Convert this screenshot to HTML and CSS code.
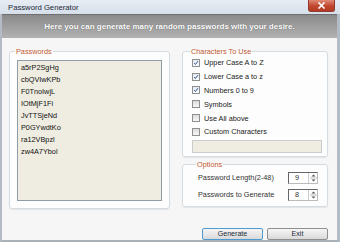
FILE: index.html
```html
<!DOCTYPE html>
<html lang="en">
<head>
	<meta charset="UTF-8">
	<title>Password Generator</title>
	<link rel="stylesheet" href="styles.css">
</head>
<body>
	<div class="window">
		<div class="titlebar">
			<span class="title">Password Generator</span>
			<span class="close">
				<svg width="9" height="7" viewBox="0 0 9 7"><path d="M1.5 0.5 L7.5 6.5 M7.5 0.5 L1.5 6.5" stroke="#fff" stroke-width="1.6"/></svg>
			</span>
		</div>
		<div class="frame">
			<div class="banner">Here you can generate many random passwords with your desire.</div>
			<div class="main">
				<fieldset class="group passwords">
					<legend>Passwords</legend>
					<div class="listbox">
						<div class="item">a5rP2SgHg</div>
						<div class="item">cbQVIwKPb</div>
						<div class="item">F0TnoIwjL</div>
						<div class="item">IOtMjF1Fi</div>
						<div class="item">JvTTSjeNd</div>
						<div class="item">P0GYwdtKo</div>
						<div class="item">ra12VBpzl</div>
						<div class="item">zw4A7Ybol</div>
					</div>
				</fieldset>
				<div class="side">
					<fieldset class="group chars">
						<legend>Characters To Use</legend>
						<div class="check"><span class="box checked"><svg width="8" height="8" viewBox="0 0 8 8"><path d="M1.6 4.2 L3.2 6 L6.6 1.6" fill="none" stroke="#2b4f8c" stroke-width="1.3"/></svg></span>Upper Case A to Z</div>
						<div class="check"><span class="box checked"><svg width="8" height="8" viewBox="0 0 8 8"><path d="M1.6 4.2 L3.2 6 L6.6 1.6" fill="none" stroke="#2b4f8c" stroke-width="1.3"/></svg></span>Lower Case a to z</div>
						<div class="check"><span class="box checked"><svg width="8" height="8" viewBox="0 0 8 8"><path d="M1.6 4.2 L3.2 6 L6.6 1.6" fill="none" stroke="#2b4f8c" stroke-width="1.3"/></svg></span>Numbers 0 to 9</div>
						<div class="check"><span class="box"></span>Symbols</div>
						<div class="check"><span class="box"></span>Use All above</div>
						<div class="check"><span class="box"></span>Custom Characters</div>
						<div class="textbox"></div>
					</fieldset>
					<fieldset class="group options">
						<legend>Options</legend>
						<div class="opt-row">
							<span class="opt-label">Password Length(2-48)</span>
							<span class="spin"><span class="spin-val">9</span><span class="spin-btns"><svg width="7" height="10" viewBox="0 0 7 10"><path d="M1.5 3.5 L3.5 1.5 L5.5 3.5 Z M1.5 6.5 L3.5 8.5 L5.5 6.5 Z" fill="#555"/><path d="M0 5 H7" stroke="#bbb" stroke-width="1"/></svg></span></span>
						</div>
						<div class="opt-row">
							<span class="opt-label">Passwords to Generate</span>
							<span class="spin"><span class="spin-val">8</span><span class="spin-btns"><svg width="7" height="10" viewBox="0 0 7 10"><path d="M1.5 3.5 L3.5 1.5 L5.5 3.5 Z M1.5 6.5 L3.5 8.5 L5.5 6.5 Z" fill="#555"/><path d="M0 5 H7" stroke="#bbb" stroke-width="1"/></svg></span></span>
						</div>
					</fieldset>
					<div class="buttons">
						<button class="btn default">Generate</button>
						<button class="btn">Exit</button>
					</div>
				</div>
			</div>
		</div>
	</div>
</body>
</html>
```
FILE: styles.css
```css
body {
	margin: 0;
	padding: 0;
	background-color: #fff;
	font-family: "Liberation Sans", Arial, sans-serif;
	font-size: 7.3px;
	color: #222;
}

.window {
	width: 340px;
	height: 242px;
	display: flex;
	flex-direction: column;
	overflow: hidden;
}

.titlebar {
	height: 14px;
	flex: none;
	display: flex;
	align-items: center;
	justify-content: space-between;
	background: linear-gradient(#e8edf4, #d6dfea);
}
.title {
	padding-left: 8px;
	font-size: 7.7px;
	color: #1c2838;
}
.close {
	width: 27px;
	height: 12px;
	margin-right: 5px;
	align-self: flex-start;
	display: flex;
	align-items: center;
	justify-content: center;
	background: linear-gradient(#de8a75, #c3462e 55%, #b23a24);
	border: 1px solid #8e3b2c;
	border-top: none;
	border-radius: 0 0 3px 3px;
	box-sizing: border-box;
}

.frame {
	flex: 1;
	display: flex;
	flex-direction: column;
	border-left: 2px solid #b3bcc5;
	border-right: 3px solid #b3bcc5;
	border-bottom: 2px solid #a9b1b9;
	background-color: #f6f6f6;
}

.banner {
	height: 24px;
	flex: none;
	display: flex;
	align-items: center;
	justify-content: center;
	background: linear-gradient(#8a8a8a, #9c9c9c 45%, #b2b2b2);
	border-top: 1px solid #6f6f6f;
	box-sizing: border-box;
	color: #fff;
	font-weight: bold;
	font-size: 8px;
	text-shadow: 0 0 1px #555;
}

.main {
	flex: 1;
	display: flex;
	gap: 12px;
	padding: 9px 9px 0 7px;
}

.group {
	margin: 0;
	border: 1px solid #d4dbe1;
	border-radius: 3px;
	background-color: #fdfdfd;
	box-shadow: 0 1px 1px #e4e4e4;
}
.group legend {
	color: #c25a31;
	padding: 0 1px;
	margin-left: -2px;
	line-height: 9px;
}

.passwords {
	width: 161px;
	height: 162px;
	box-sizing: border-box;
	padding: 4px 7px 7px 7px;
}
.listbox {
	height: 141px;
	box-sizing: border-box;
	background-color: #efede2;
	border: 1px solid #8f9dab;
	padding: 1px 3px;
}
.item {
	line-height: 12px;
	color: #111;
}

.side {
	width: 146px;
	display: flex;
	flex-direction: column;
}

.chars {
	height: 110px;
	box-sizing: border-box;
	padding: 0 5px 0 9px;
}
.check {
	height: 13.8px;
	display: flex;
	align-items: center;
}
.box {
	width: 8px;
	height: 8px;
	box-sizing: border-box;
	border: 1px solid #8e8f8f;
	background: linear-gradient(#dcdcdc, #f6f6f6);
	margin-right: 4px;
	display: flex;
	align-items: center;
	justify-content: center;
}
.box.checked {
	background: linear-gradient(#e4eaf3, #fafcff);
}
.textbox {
	margin-top: 1px;
	height: 13px;
	box-sizing: border-box;
	background-color: #efede2;
	border: 1px solid #c9cdd0;
}

.options {
	margin-top: 3px;
	height: 47px;
	box-sizing: border-box;
	padding: 0 9px 0 15px;
}
.opt-row {
	height: 17px;
	display: flex;
	align-items: center;
	justify-content: space-between;
	color: #333;
}
.spin {
	width: 30px;
	height: 12px;
	box-sizing: border-box;
	display: flex;
	background-color: #fff;
	border: 1px solid #666;
	border-right-color: #bbb;
	border-bottom-color: #bbb;
}
.spin-val {
	flex: 1;
	padding-left: 6px;
	line-height: 10px;
}
.spin-btns {
	width: 8px;
	border-left: 1px solid #ccc;
	display: flex;
	align-items: center;
	justify-content: center;
}

.buttons {
	margin-top: auto;
	display: flex;
	justify-content: flex-end;
	gap: 4px;
	padding-bottom: 0;
}
.btn {
	width: 61px;
	height: 12px;
	padding: 0;
	font-family: "Liberation Sans", Arial, sans-serif;
	font-size: 7.1px;
	color: #1a2a3a;
	background: linear-gradient(#f6f6f6, #e8e8e8 50%, #d9d9d9);
	border: 1px solid #8e8f8f;
	border-radius: 2px;
}
.btn.default {
	border-color: #4d9bd2;
}
```
